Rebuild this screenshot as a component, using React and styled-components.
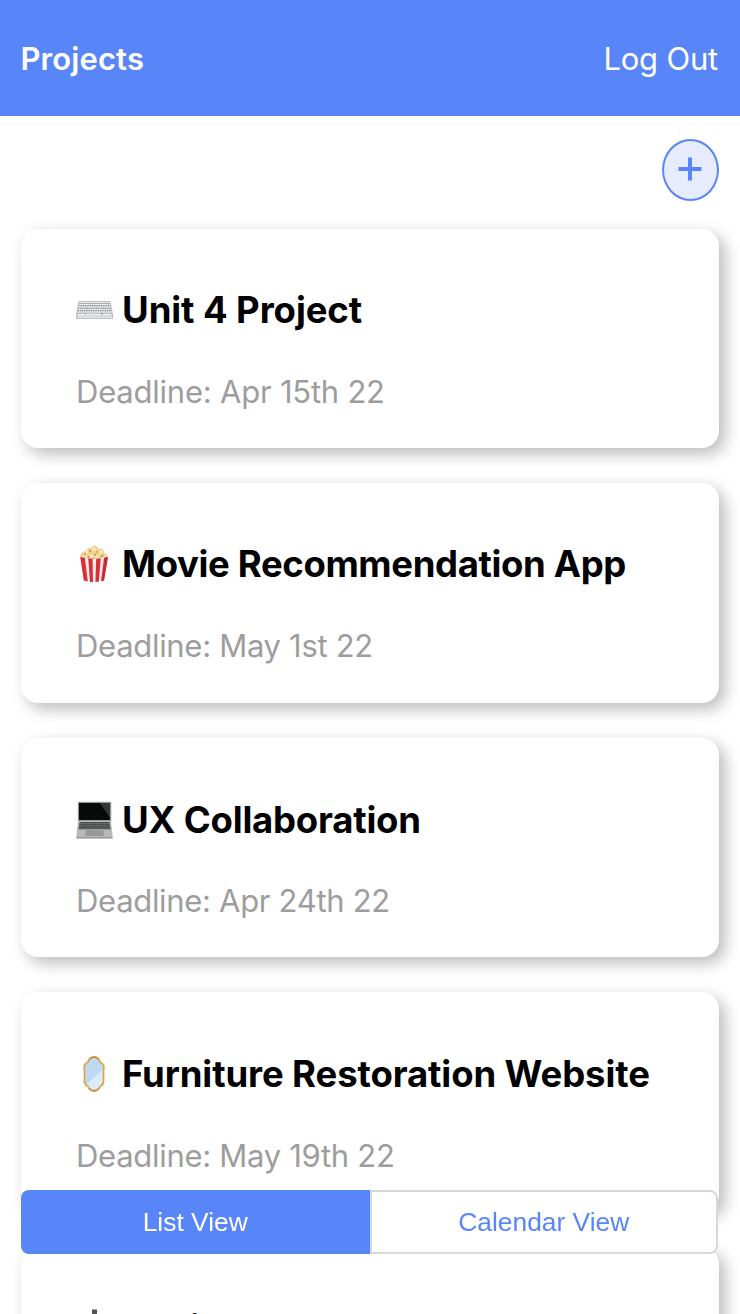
import React from "react";
import styled, { createGlobalStyle } from "styled-components";

const GlobalStyle = createGlobalStyle`
  *, *::before, *::after { box-sizing: border-box; }
  body {
    margin: 0;
    background: #fff;
    font-family: Inter, "Liberation Sans", sans-serif;
  }
`;

const Page = styled.div`
  height: 100vh;
  overflow: hidden;
`;

const Header = styled.header`
  display: flex;
  align-items: center;
  justify-content: space-between;
  height: 115.6px;
  padding: 2px 22px 0 20.5px;
  background: #5885f8;
  color: #fff;
  font-size: 31px;
  line-height: 38px;
`;

const Heading = styled.h1`
  margin: 0;
  font-size: 31px;
  font-weight: 600;
  letter-spacing: 0.1px;
`;

const LogOut = styled.a`
  font-weight: 400;
  letter-spacing: -0.2px;
`;

const Toolbar = styled.div`
  display: flex;
  justify-content: flex-end;
  padding: 23px 21px 28px;
`;

const AddButton = styled.button`
  display: flex;
  align-items: center;
  justify-content: center;
  width: 57px;
  height: 62px;
  padding: 0 1px 1px 0;
  border: 2px solid #5885f8;
  border-radius: 50%;
  background: #e6ebfe;
  color: #5885f8;
`;

const List = styled.main`
  display: flex;
  flex-direction: column;
  gap: 35px;
  padding: 0 21.5px 0 21px;
`;

const Card = styled.article`
  flex: none;
  display: flex;
  flex-direction: column;
  justify-content: space-between;
  height: 219.6px;
  padding: 57px 55px 37.4px;
  border-radius: 17px;
  background: #fff;
  box-shadow: 6px 6px 16px rgba(0, 0, 0, 0.27);
`;

const TitleRow = styled.div`
  display: flex;
  align-items: center;
  gap: 9px;
  height: ${(p) => p.$height}px;
`;

const Picture = styled.svg`
  flex: none;
  width: 37px;
  height: 38px;
`;

const Title = styled.h2`
  margin: 0;
  font-size: 36.5px;
  font-weight: 700;
  line-height: 48px;
  letter-spacing: ${(p) => p.$tracking}px;
  white-space: nowrap;
`;

const Deadline = styled.p`
  margin: 0;
  color: #9d9d9d;
  font-size: 31px;
  line-height: 38px;
  letter-spacing: ${(p) => p.$tracking}px;
`;

const Tabs = styled.nav`
  position: fixed;
  right: 22px;
  bottom: 59.6px;
  left: 21px;
  display: flex;
  height: 64.4px;
`;

const Tab = styled.button`
  flex: none;
  width: 50%;
  padding: 0;
  border: ${(p) => (p.$active ? "0" : "2px solid #d7d8d8")};
  border-radius: ${(p) => (p.$active ? "8px 0 0 8px" : "0 8px 8px 0")};
  background: ${(p) => (p.$active ? "#5885f8" : "#fff")};
  color: ${(p) => (p.$active ? "#fff" : "#5885f8")};
  font: 26.4px "Liberation Sans", sans-serif;
`;

function PlusIcon() {
  return (
    <svg width="24" height="24" viewBox="0 0 24 24">
      <path d="M12 0.5V23.5M0.5 12H23.5" fill="none" stroke="currentColor" strokeWidth="4" />
    </svg>
  );
}

function Keyboard() {
  return (
    <Picture viewBox="0 0 37 38">
      <path d="M3 10.5H34L36.5 23.5V27.5H.5V23.5Z" fill="#e8e9ea" stroke="#aeb0b2" strokeWidth=".8" />
      <path d="M3.5 12H33.6L35.8 23.4H1.2Z" fill="#96989a" />
      <path d="M3.4 13.5H33.9M3 16H34.3M2.6 18.5H34.7M2.1 21H35.2" stroke="#fff" strokeWidth="1.5" strokeDasharray="1.8 .45" />
      <path d="M1.8 23.1H9M10 23.1H25M27 23.1H35" stroke="#f7f7f7" strokeWidth="1.2" />
      <path d="M.7 25.3H36.3" stroke="#c4c6c8" strokeWidth=".8" />
    </Picture>
  );
}

function Popcorn() {
  return (
    <Picture viewBox="0 0 37 38">
      <path d="M5 13C3 10 6 6 10 6C10 3 14 3 16 2C18-1 22 2 23 4C27 3 28 6 28 8C32 9 32 12 31 14L27 16H8Z" fill="#f1d394" />
      <g fill="#fff0c1">
        <circle cx="11" cy="7" r="1.6" /><circle cx="18" cy="4" r="1.6" /><circle cx="25" cy="7" r="1.5" />
        <circle cx="8" cy="12" r="1.6" /><circle cx="15" cy="11" r="1.7" /><circle cx="22" cy="12" r="1.7" /><circle cx="29" cy="12" r="1.3" />
      </g>
      <path d="M8 9h2M13 5l2 2M20 7h2M12 13l1-2M18 9l2 1M25 12l2-2M17 14h2" stroke="#bd893d" strokeWidth="1.1" />
      <path d="M4.2 12L18 14L32 12L28 35.5Q18 38.5 7.8 35.5Z" fill="#f6eeec" />
      <path d="M4.2 12L8.9 12.8L11.8 36.4L7.8 35.5ZM12.2 13.2L16.6 13.8L17 37H14ZM20.2 13.8L24.8 13.2L22.8 36.8H19.4ZM28 12.8L32 12L28 35.5L25 36.3Z" fill="#db3039" />
      <path d="M29 12.5L32 12L28 35.5L26 36Z" fill="#a8272c" opacity=".5" />
    </Picture>
  );
}

function Laptop() {
  return (
    <Picture viewBox="0 0 37 38">
      <rect x="1.8" y=".7" width="33.5" height="20" rx="1" fill="#999b9b" />
      <path d="M3 2H34V19H3Z" fill="#080909" />
      <path d="M24 2H34V17Z" fill="#343636" />
      <path d="M2 20H35L36.7 36V37.4H.3V36Z" fill="#b7b8b8" />
      <path d="M3.7 21H33.4L34.5 28.2H2.6Z" fill="#4a4b4c" />
      <path d="M4 22.6H33M3.7 24.8H33.4M3.3 27H33.8" stroke="#999" strokeWidth=".6" strokeDasharray="1.4 .6" />
      <path d="M9.8 29.2H27.2L28.2 35.1H8.9Z" fill="#979898" />
      <path d="M.5 36.8H36.5" stroke="#858686" strokeWidth=".9" />
    </Picture>
  );
}

function Mirror() {
  const outline = "M18 2C21 2 23 4 24 7C28 9 28.5 12 27.5 15V24C28 28 27 30 24 31.5C23 34.5 21 36 18 36C15 36 13 34.5 12 31.5C9 30 8 28 8.5 24V15C7.5 12 8 9 12 7C13 4 15 2 18 2Z";
  return (
    <Picture viewBox="0 0 37 38">
      <path d={outline} fill="#bdd9f3" />
      <path d="M27 14V24Q28 29 24 31.5Q22 36 18 36Q14 36 12 31.5L10 30Z" fill="#ddecfb" />
      <path d={outline} fill="none" stroke="#e0a646" strokeWidth="1.8" />
      <path d="M13 5Q18-1 23 5M13 33Q18 38 23 33" fill="none" stroke="#9d702d" strokeWidth=".7" />
    </Picture>
  );
}

function Microphone() {
  return (
    <Picture viewBox="0 0 37 38">
      <path d="M16 .5H21V6H16Z" fill="#555" />
      <path d="M11 8Q18 2 25 8V24Q18 30 11 24ZM16 27H20V34H27V37H9V34H16Z" fill="#777" />
    </Picture>
  );
}

const projects = [
  { icon: <Keyboard />, title: "Unit 4 Project", deadline: "Apr 15th 22", rowHeight: 48.8, titleTracking: -0.08, dateTracking: -0.22 },
  { icon: <Popcorn />, title: "Movie Recommendation App", deadline: "May 1st 22", rowHeight: 48, titleTracking: -0.36, dateTracking: -0.3 },
  { icon: <Laptop />, title: "UX Collaboration", deadline: "Apr 24th 22", rowHeight: 50, titleTracking: -0.2, dateTracking: -0.31 },
  { icon: <Mirror />, title: "Furniture Restoration Website", deadline: "May 19th 22", rowHeight: 48.8, titleTracking: -0.1, dateTracking: -0.29 },
  { icon: <Microphone />, title: "Design", rowHeight: 48.8, titleTracking: -0.3 },
];

export default function App() {
  return (
    <Page>
      <GlobalStyle />
      <Header>
        <Heading>Projects</Heading>
        <LogOut>Log Out</LogOut>
      </Header>
      <Toolbar>
        <AddButton aria-label="Add project"><PlusIcon /></AddButton>
      </Toolbar>
      <List>
        {projects.map((project) => (
          <Card key={project.title}>
            <TitleRow $height={project.rowHeight}>
              {project.icon}
              <Title $tracking={project.titleTracking}>{project.title}</Title>
            </TitleRow>
            {project.deadline && (
              <Deadline $tracking={project.dateTracking}>Deadline: {project.deadline}</Deadline>
            )}
          </Card>
        ))}
      </List>
      <Tabs>
        <Tab $active>List View</Tab>
        <Tab>Calendar View</Tab>
      </Tabs>
    </Page>
  );
}
